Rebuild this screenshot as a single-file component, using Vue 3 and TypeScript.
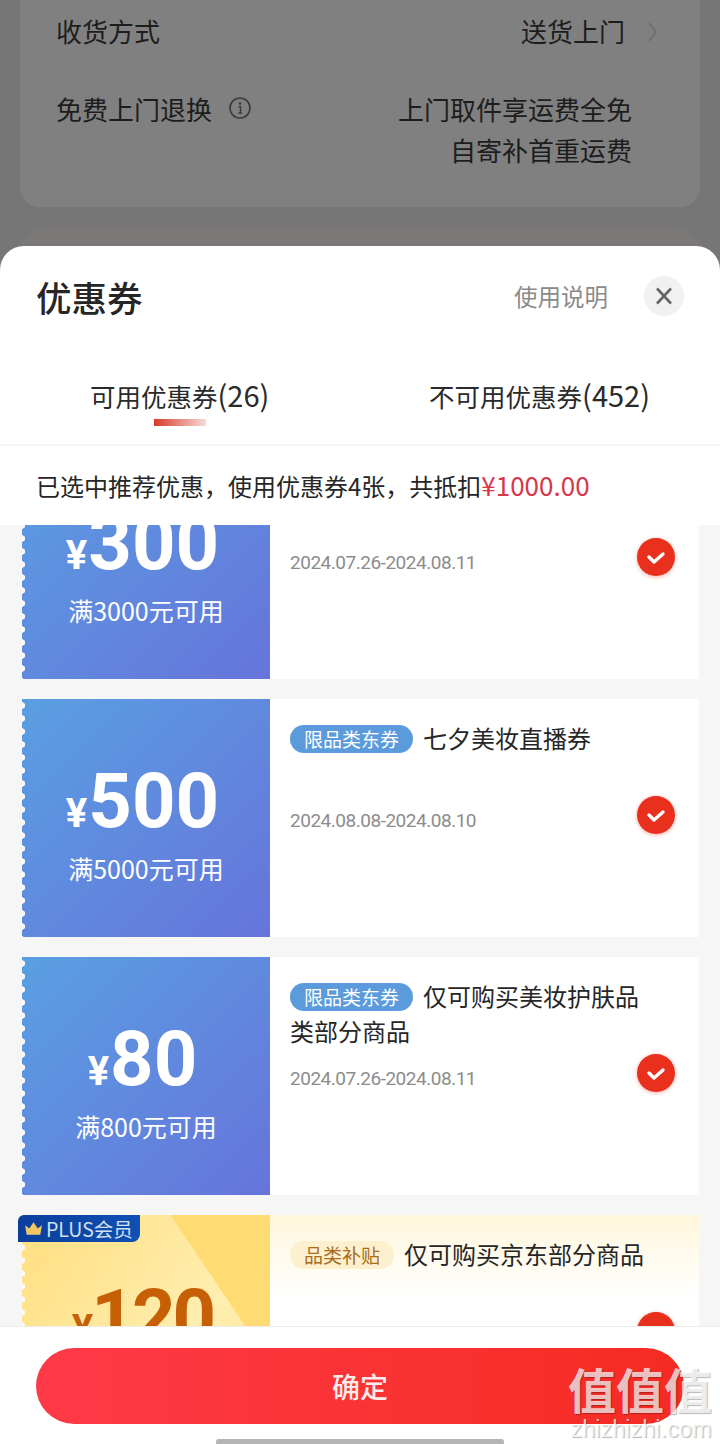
<template>
  <div class="page">
    <div class="backdrop">
      <div class="info-card">
        <div class="info-row first">
          <span>收货方式</span>
          <span class="way">送货上门
            <svg class="chevron" width="12" height="22" viewBox="0 0 12 22"><path d="M3 2l7 9-7 9" fill="none" stroke="#6c6c6c" stroke-width="1.3" /></svg>
          </span>
        </div>
        <div class="info-row">
          <span class="return-label">免费上门退换
            <svg class="info-icon" width="24" height="24" viewBox="0 0 24 24">
              <circle cx="12" cy="12" r="10" fill="none" stroke="#3c3c3c" stroke-width="1.6" />
              <circle cx="12" cy="7.6" r="1.3" fill="#3c3c3c" />
              <path d="M10.6 10.8h1.9v6M10.4 17h3.6" fill="none" stroke="#3c3c3c" stroke-width="1.5" />
            </svg>
          </span>
          <span class="return-text">上门取件享运费全免<br />自寄补首重运费</span>
        </div>
      </div>
      <div class="next-card"></div>
    </div>

    <div class="sheet">
      <div class="sheet-head">
        <h1>优惠券</h1>
        <span class="help">使用说明</span>
        <span class="close">
          <svg width="18" height="18" viewBox="0 0 18 18"><path d="M2 1.5l14 15M16 1.5L2 16.5" stroke="#666" stroke-width="2.6" /></svg>
        </span>
      </div>

      <div class="tabs">
        <div class="tab active">可用优惠券<span class="count">(26)</span></div>
        <div class="tab">不可用优惠券<span class="count">(452)</span></div>
      </div>

      <div class="notice">已选中推荐优惠，使用优惠券4张，共抵扣<em>¥1000.00</em></div>

      <div class="list">
        <div class="scroller">
          <div v-for="c in coupons" :key="c.amount" class="coupon" :class="{ plus: c.plus }">
            <div class="face">
              <div class="price"><i>¥</i>{{ c.amount }}</div>
              <div class="limit">{{ c.limit }}</div>
            </div>
            <span v-if="c.plus" class="plus-badge">
              <svg width="19" height="15" viewBox="0 0 18 14"><path d="M1 4l4 3 4-6 4 6 4-3-1.6 9H2.6z" fill="#f2c766" /></svg>
              PLUS会员
            </span>
            <div class="detail">
              <div class="title"><span v-if="c.tag" class="tag">{{ c.tag }}</span>{{ c.title }}</div>
              <div class="date">{{ c.date }}</div>
              <span class="check">
                <svg width="24" height="18" viewBox="0 0 24 18"><path d="M5 9l5 5 9-8" fill="none" stroke="#fff" stroke-width="3.4" stroke-linecap="round" stroke-linejoin="round" /></svg>
              </span>
            </div>
          </div>
        </div>
      </div>

      <div class="footer">
        <button class="confirm">确定</button>
        <div class="home-bar"></div>
      </div>
    </div>

    <div class="watermark">
      <div class="wm-big">值值值</div>
      <div class="wm-small">zhizhizhi.com</div>
    </div>
  </div>
</template>

<script setup lang="ts">
interface Coupon {
  amount: string
  limit: string
  tag: string
  title: string
  date: string
  plus?: boolean
}

const coupons: Coupon[] = [
  { amount: '300', limit: '满3000元可用', tag: '', title: '', date: '2024.07.26-2024.08.11' },
  { amount: '500', limit: '满5000元可用', tag: '限品类东券', title: '七夕美妆直播券', date: '2024.08.08-2024.08.10' },
  { amount: '80', limit: '满800元可用', tag: '限品类东券', title: '仅可购买美妆护肤品类部分商品', date: '2024.07.26-2024.08.11' },
  { amount: '120', limit: '满1200元可用', tag: '品类补贴', title: '仅可购买京东部分商品', date: '2024.07.26-2024.08.11', plus: true },
]
</script>

<style>
html, body { margin: 0; background: #767676; }
</style>

<style scoped>
.page {
  position: relative;
  width: 720px;
  height: 1444px;
  overflow: hidden;
  display: flex;
  flex-direction: column;
  font-family: "Noto Sans CJK SC", "Noto Sans", sans-serif;
  color: #222;
}

.backdrop {
  height: 266px;
  margin-bottom: -20px;
  padding: 0 20px;
  box-sizing: border-box;
  flex: none;
  display: flex;
  flex-direction: column;
  gap: 21px;
  background: #767676;
  overflow: hidden;
}
.info-card {
  height: 207px;
  flex: none;
  box-sizing: border-box;
  padding: 10px 68px 0 36px;
  background: #808080;
  border-radius: 0 0 20px 20px;
  color: #1d1d1d;
  font-size: 26px;
  line-height: 41px;
}
.info-row { display: flex; justify-content: space-between; }
.info-row.first { height: 78px; margin-right: -27px; }
.way { display: flex; align-items: center; gap: 21px; height: 46px; margin-top: -3px; }
.chevron { margin-top: 3px; margin-right: 1px; }
.return-label { display: flex; align-items: flex-start; gap: 16px; }
.info-icon { margin-top: 8px; }
.return-text { text-align: right; }
.next-card {
  height: 60px;
  flex: none;
  background: #7d7878;
  border-radius: 24px 24px 0 0;
}

.sheet {
  flex: 1;
  min-height: 0;
  display: flex;
  flex-direction: column;
  background: #fff;
  border-radius: 24px 24px 0 0;
  overflow: hidden;
  position: relative;
}
.sheet-head {
  height: 100px;
  flex: none;
  display: flex;
  align-items: center;
  box-sizing: border-box;
  padding: 0 36px;
}
.sheet-head h1 {
  margin: 0 auto 0 0;
  font-size: 35.5px;
  font-weight: 500;
  color: #262626;
}
.help { font-size: 23.5px; color: #8a8a8a; margin-right: 36px; }
.close {
  width: 40px;
  height: 40px;
  border-radius: 50%;
  background: #f1f1f1;
  display: flex;
  align-items: center;
  justify-content: center;
}

.tabs {
  height: 100px;
  flex: none;
  display: flex;
  box-sizing: border-box;
  padding: 23px 70px 0 90px;
  justify-content: space-between;
  border-bottom: 2px solid #f6f6f6;
}
.tab {
  position: relative;
  font-size: 25.5px;
  line-height: 50px;
  height: 50px;
  color: #2a2a2a;
}
.count { font-size: 29px; }
.tab.active::after {
  content: "";
  position: absolute;
  left: 64px;
  top: 50px;
  width: 52px;
  height: 7px;
  background: linear-gradient(90deg, #d63a28, #f7dcd8);
}

.notice {
  height: 79px;
  flex: none;
  box-sizing: border-box;
  padding: 0 36px;
  font-size: 24px;
  line-height: 77px;
  background: #fff;
  color: #262626;
  position: relative;
  z-index: 1;
}
.notice em { font-style: normal; color: #d8364a; font-size: 26px; }

.list {
  flex: 1;
  min-height: 0;
  overflow: hidden;
  background: #f6f6f6;
}
.scroller {
  margin-top: -84px;
  padding: 0 21px 0 22px;
  display: flex;
  flex-direction: column;
  gap: 20px;
}
.coupon {
  position: relative;
  height: 238px;
  flex: none;
  display: flex;
  background: #fff;
}
.face {
  position: relative;
  width: 248px;
  flex: none;
  box-sizing: border-box;
  padding-top: 66px;
  text-align: center;
  color: #fff;
  background: linear-gradient(135deg, #5a9fe2, #6674da);
}
.face::before {
  content: "";
  position: absolute;
  left: 0;
  top: 0;
  bottom: 0;
  width: 3px;
  background: radial-gradient(circle at 0 50%, #fafafa 3px, transparent 3.4px) 0 0 / 3px 13px repeat-y;
}
.price {
  font-family: Roboto, "Noto Sans", sans-serif;
  font-size: 76px;
  font-weight: 700;
  line-height: 72px;
  padding-right: 7px;
}
.price i {
  font-style: normal;
  font-size: 40px;
  margin-right: 1px;
}
.limit {
  font-size: 25px;
  line-height: 32px;
  margin-top: 2px;
}
.detail {
  position: relative;
  flex: 1;
  box-sizing: border-box;
  padding: 21px 50px 0 20px;
}
.title {
  height: 70px;
  font-size: 24px;
  line-height: 35px;
  color: #262626;
}
.tag {
  display: inline-block;
  height: 28px;
  line-height: 28px;
  padding: 0 14px;
  margin-right: 10px;
  border-radius: 14px;
  font-size: 19px;
  color: #fff;
  background: #5b9bdb;
  vertical-align: 1px;
}
.date {
  margin-top: 17px;
  font-family: Roboto, "Noto Sans", sans-serif;
  font-size: 19px;
  letter-spacing: -0.48px;
  line-height: 28px;
  color: #8c8c8c;
}
.check {
  position: absolute;
  left: 367px;
  top: 97px;
  width: 38px;
  height: 38px;
  border-radius: 50%;
  background: #e8301c;
  box-shadow: 0 1px 4px rgba(232, 48, 28, 0.4);
  display: flex;
  align-items: center;
  justify-content: center;
}

.coupon.plus .face {
  color: #c65f06;
  background:
    linear-gradient(56deg, transparent 75.5%, #ffdb74 75.7%),
    linear-gradient(125deg, #ffdf80, #ffeeb0 62%, #ffe08a);
}
.coupon.plus .face::before {
  background-image: radial-gradient(circle at 0 50%, #fdfaf0 3px, transparent 3.4px);
}
.coupon.plus .price { letter-spacing: -3px; }
.coupon.plus .detail {
  background: linear-gradient(180deg, #fff6db, #fff 34%);
}
.coupon.plus .tag {
  background: #fdf0cf;
  color: #a86c1c;
}
.plus-badge {
  position: absolute;
  left: -4px;
  top: 0;
  width: 122px;
  height: 27px;
  box-sizing: border-box;
  display: flex;
  align-items: center;
  gap: 3px;
  padding-left: 6px;
  border-radius: 6px 0 8px 0;
  background: linear-gradient(90deg, #0a3f9c, #0f50b4);
  color: #d3e0f0;
  font-size: 19.5px;
  white-space: nowrap;
}

.footer {
  height: 118px;
  flex: none;
  box-sizing: border-box;
  border-top: 1px solid #ececec;
  padding: 21px 36px 0;
  background: #fff;
  position: relative;
}
.confirm {
  display: block;
  width: 100%;
  height: 76px;
  border: 0;
  padding: 0;
  border-radius: 38px;
  background: linear-gradient(90deg, #ff3a48, #f52b22);
  color: #fbeaea;
  font-family: inherit;
  font-size: 28px;
  font-weight: 500;
}
.home-bar {
  position: absolute;
  left: 216px;
  bottom: 0;
  width: 288px;
  height: 5px;
  border-radius: 3px 3px 0 0;
  background: #b4b4b4;
}

.watermark {
  position: absolute;
  left: 566px;
  top: 1358px;
  width: 148px;
  text-align: center;
  color: rgba(255, 255, 255, 0.72);
  text-shadow: 1px 1px 1px rgba(0, 0, 0, 0.28);
}
.wm-big {
  font-size: 48px;
  font-weight: 700;
  line-height: 60px;
}
.wm-small {
  font-family: "Liberation Sans", sans-serif;
  font-size: 23.5px;
  line-height: 26px;
  white-space: nowrap;
  margin-top: -2px;
  margin-left: 2px;
}
</style>
